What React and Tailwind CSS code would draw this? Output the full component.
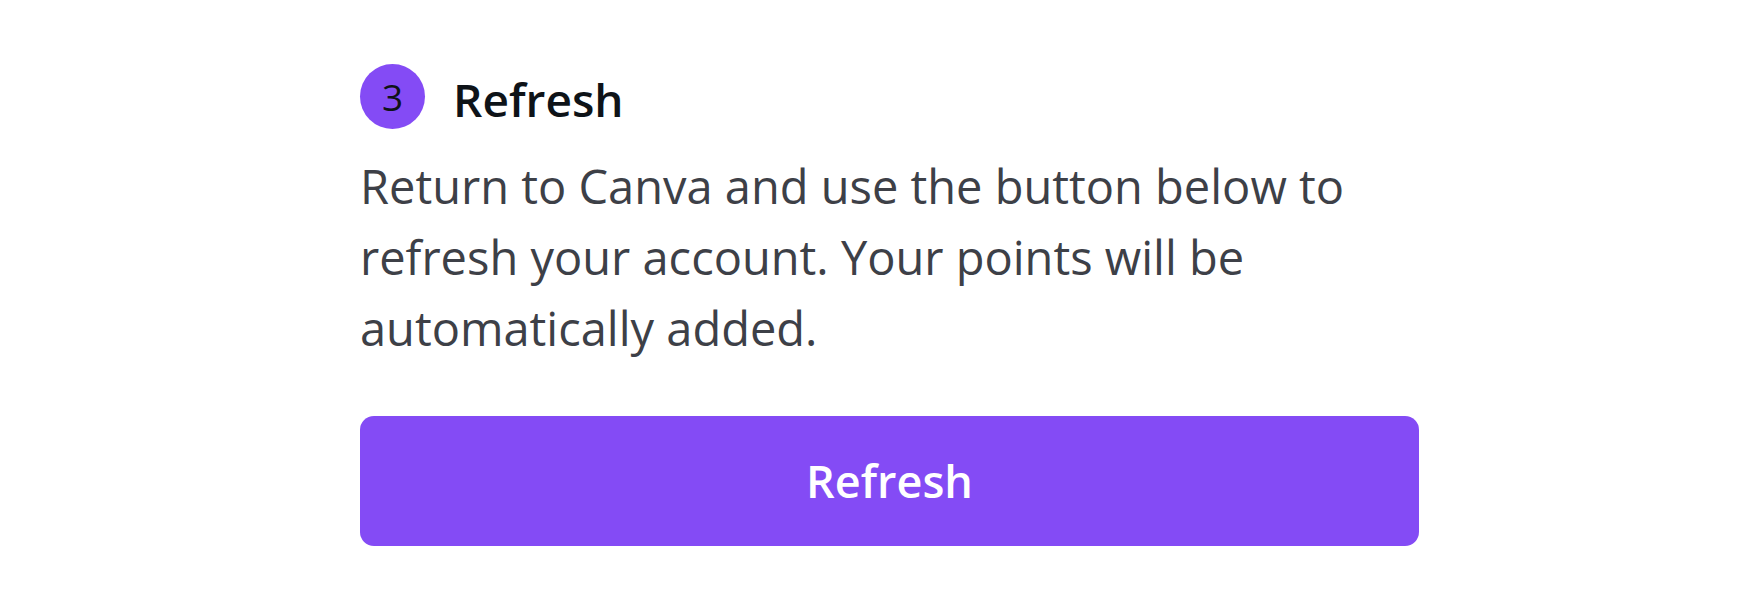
export default function App() {
  return (
    <div className="w-[1758px] h-[590px] bg-white" style={{ fontFamily: '"Open Sans", "Noto Sans", sans-serif' }}>
      <div className="ml-[360px] w-[1059px] pt-[64px]">
        <div className="flex items-center gap-[28px]">
          <div className="w-[65px] h-[65px] rounded-full bg-[#844bf5] flex items-center justify-center text-[37px] text-[#0e1318] leading-none">
            3
          </div>
          <div className="text-[46px] font-semibold text-[#0e1318] leading-none mt-[4px]">Refresh</div>
        </div>
        <p className="mt-[22px] text-[47px] leading-[71px] text-[#3d4047] w-[1059px]">
          Return to Canva and use the button below to refresh your account. Your points will be automatically added.
        </p>
        <button className="mt-[52px] w-[1059px] h-[130px] rounded-[14px] bg-[#844bf5] text-white text-[45px] font-semibold">
          Refresh
        </button>
      </div>
    </div>
  );
}
